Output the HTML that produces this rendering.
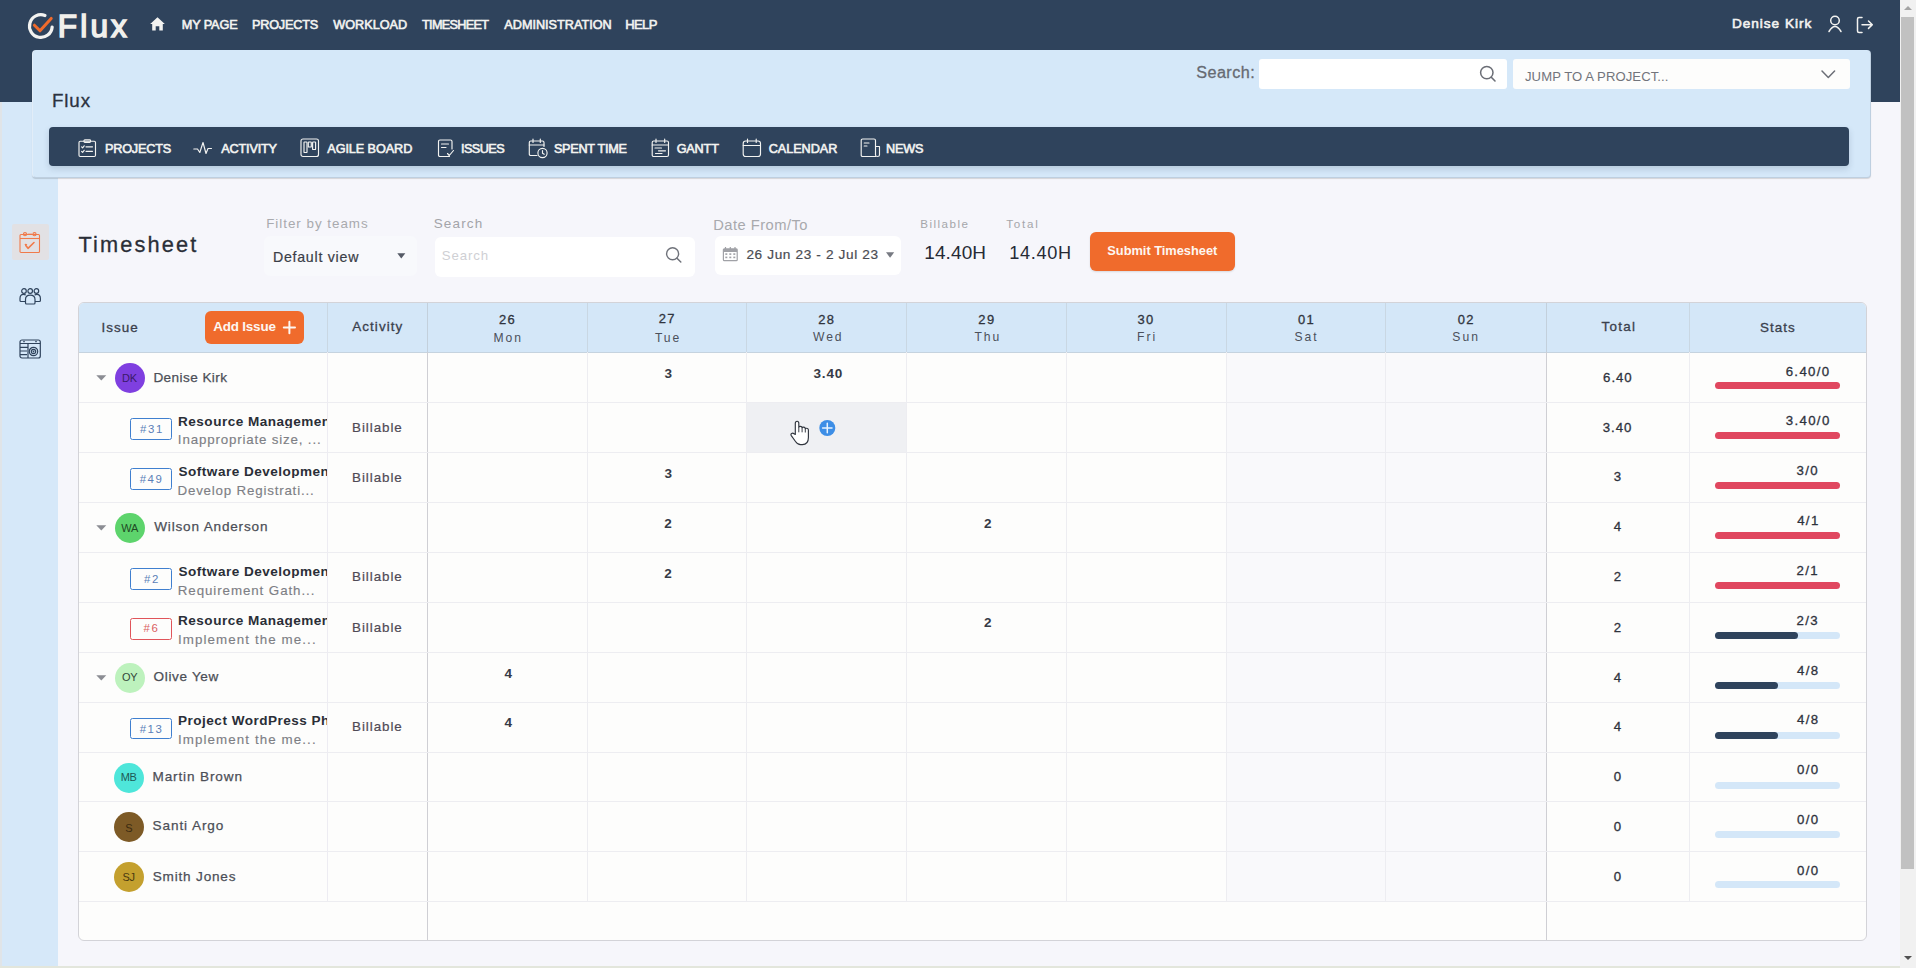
<!DOCTYPE html>
<html><head><meta charset="utf-8">
<style>
*{box-sizing:border-box;margin:0;padding:0}
html,body{width:1916px;height:968px;overflow:hidden}
body{position:relative;background:#f6f6fb;font-family:"Liberation Sans",sans-serif}
.a,.t{position:absolute}
.t{white-space:pre}
svg{position:absolute;overflow:visible}
</style></head><body>

<div class="a" style="left:0;top:0;width:1900px;height:102px;background:#2f435c"></div>
<div class="a" style="left:0;top:102px;width:58px;height:866px;background:#d6e8f9;border-left:2px solid #e0e4e8"></div>
<div class="a" style="left:32px;top:50px;width:1839px;height:127.5px;background:#d5e8f9;border-radius:4px;border:1px solid rgba(110,120,135,.22);border-top:none;border-left:1px solid #e2edf8;box-shadow:0 1px 1px rgba(0,0,0,.14)"></div>
<div class="a" style="left:49px;top:127px;width:1800px;height:39px;background:#2f435c;border-radius:4px;box-shadow:0 3px 6px rgba(40,60,90,.18)"></div>
<div class="a" style="left:1900px;top:0;width:16px;height:968px;background:#f1f1f1"></div>
<div class="a" style="left:1901px;top:17px;width:13px;height:852px;background:#c1c1c1"></div>
<svg style="left:1904px;top:5px" width="8" height="6"><path d="M0 5 L4 1 L8 5Z" fill="#a3a3a3"/></svg>
<svg style="left:1904px;top:955px" width="8" height="6"><path d="M0 1 L4 5 L8 1Z" fill="#505050"/></svg>
<div class="a" style="left:0;top:966px;width:1900px;height:2px;background:#e3e6dc"></div>
<svg style="left:26px;top:11px" width="30" height="30" viewBox="0 0 30 30">
 <path d="M26.16 16.0 A11.35 11.35 0 1 1 18.99 4.48" fill="none" stroke="#f3f3f1" stroke-width="3.2" stroke-linecap="round"/>
 <path d="M8.4 14.2 L14 19.8 L25.2 7.4" fill="none" stroke="#f06b2c" stroke-width="3" stroke-linecap="round" stroke-linejoin="round"/>
</svg>
<svg style="left:150px;top:17px" width="15" height="14" viewBox="0 0 15 14"><path d="M7.5 0.3 L14.8 7 L12.8 7 L12.8 13.5 L9.3 13.5 L9.3 9.3 L5.7 9.3 L5.7 13.5 L2.2 13.5 L2.2 7 L0.2 7 Z" fill="#f3f3f1"/></svg>
<div class="t" style="left:181.67px;top:19.28px;font-size:12.68px;line-height:12.68px;font-weight:400;color:#f3f3f1;letter-spacing:-0.086px;-webkit-text-stroke:0.6px #f3f3f1">MY PAGE</div>
<div class="t" style="left:251.95px;top:19.28px;font-size:12.68px;line-height:12.68px;font-weight:400;color:#f3f3f1;letter-spacing:-0.192px;-webkit-text-stroke:0.6px #f3f3f1">PROJECTS</div>
<div class="t" style="left:333.17px;top:19.28px;font-size:12.68px;line-height:12.68px;font-weight:400;color:#f3f3f1;letter-spacing:0.019px;-webkit-text-stroke:0.6px #f3f3f1">WORKLOAD</div>
<div class="t" style="left:422.05px;top:19.28px;font-size:12.68px;line-height:12.68px;font-weight:400;color:#f3f3f1;letter-spacing:-0.700px;-webkit-text-stroke:0.6px #f3f3f1">TIMESHEET</div>
<div class="t" style="left:504.30px;top:19.28px;font-size:12.68px;line-height:12.68px;font-weight:400;color:#f3f3f1;letter-spacing:-0.006px;-webkit-text-stroke:0.6px #f3f3f1">ADMINISTRATION</div>
<div class="t" style="left:625.26px;top:18.29px;font-size:13.04px;line-height:13.04px;font-weight:400;color:#f3f3f1;letter-spacing:-0.649px;-webkit-text-stroke:0.6px #f3f3f1">HELP</div>
<div class="t" style="left:57.86px;top:10.66px;font-size:31.62px;line-height:31.62px;font-weight:400;color:#f1f0ec;letter-spacing:3.094px;-webkit-text-stroke:1.5px #f1f0ec">Flux</div>
<div class="t" style="left:1732.03px;top:17.44px;font-size:13.58px;line-height:13.58px;font-weight:400;color:#f3f3f1;letter-spacing:0.979px;-webkit-text-stroke:0.6px #f3f3f1">Denise Kirk</div>
<svg style="left:1828px;top:15px" width="16" height="18" viewBox="0 0 16 18">
<circle cx="7" cy="5.5" r="4.3" fill="none" stroke="#f3f3f1" stroke-width="1.5"/>
<path d="M1 16.5 Q7 6.5 13 16.5" fill="none" stroke="#f3f3f1" stroke-width="1.5" stroke-linecap="round"/></svg>
<svg style="left:1856px;top:16px" width="20" height="18" viewBox="0 0 20 18">
<path d="M6 1.5 H3 Q1.5 1.5 1.5 3 V15 Q1.5 16.5 3 16.5 H6" fill="none" stroke="#f3f3f1" stroke-width="1.5" stroke-linecap="round"/>
<path d="M6 8.7 H16 M12.5 5 L16.3 8.7 L12.5 12.4" fill="none" stroke="#f3f3f1" stroke-width="1.5" stroke-linecap="round" stroke-linejoin="round"/></svg>
<div class="t" style="left:52.09px;top:91.96px;font-size:18.78px;line-height:18.78px;font-weight:400;color:#2b3240;letter-spacing:0.830px;-webkit-text-stroke:0.3px #2b3240">Flux</div>
<div class="t" style="left:1196.24px;top:63.86px;font-size:16.22px;line-height:16.22px;font-weight:400;color:#666a72;letter-spacing:0.431px;-webkit-text-stroke:0.3px #666a72">Search:</div>
<div class="a" style="left:1259px;top:59px;width:248px;height:30px;background:#fff;border-radius:3px"></div>
<svg style="left:1479px;top:65px" width="18" height="18" viewBox="0 0 18 18"><circle cx="7.8" cy="7.6" r="6.2" fill="none" stroke="#6b6e76" stroke-width="1.5"/><path d="M12.3 12.2 L16 16" stroke="#6b6e76" stroke-width="1.6" stroke-linecap="round"/></svg>
<div class="a" style="left:1513px;top:59px;width:337px;height:30px;background:#fdfdfc;border-radius:3px"></div>
<div class="t" style="left:1524.98px;top:69.70px;font-size:13.10px;line-height:13.10px;font-weight:400;color:#72747b;letter-spacing:0.083px">JUMP TO A PROJECT...</div>
<svg style="left:1821px;top:70px" width="15" height="9" viewBox="0 0 15 9"><path d="M1 1 L7.3 7.5 L13.6 1" fill="none" stroke="#6b6e76" stroke-width="1.5" stroke-linecap="round" stroke-linejoin="round"/></svg>
<div class="t" style="left:104.95px;top:142.56px;font-size:12.68px;line-height:12.68px;font-weight:400;color:#f3f3f1;letter-spacing:-0.192px;-webkit-text-stroke:0.6px #f3f3f1">PROJECTS</div>
<div class="t" style="left:221.30px;top:142.56px;font-size:12.68px;line-height:12.68px;font-weight:400;color:#f3f3f1;letter-spacing:-0.180px;-webkit-text-stroke:0.6px #f3f3f1">ACTIVITY</div>
<div class="t" style="left:327.30px;top:142.56px;font-size:12.68px;line-height:12.68px;font-weight:400;color:#f3f3f1;letter-spacing:-0.091px;-webkit-text-stroke:0.6px #f3f3f1">AGILE BOARD</div>
<div class="t" style="left:460.96px;top:142.56px;font-size:12.68px;line-height:12.68px;font-weight:400;color:#f3f3f1;letter-spacing:-0.569px;-webkit-text-stroke:0.6px #f3f3f1">ISSUES</div>
<div class="t" style="left:553.95px;top:142.56px;font-size:12.68px;line-height:12.68px;font-weight:400;color:#f3f3f1;letter-spacing:-0.290px;-webkit-text-stroke:0.6px #f3f3f1">SPENT TIME</div>
<div class="t" style="left:676.67px;top:142.56px;font-size:12.68px;line-height:12.68px;font-weight:400;color:#f3f3f1;letter-spacing:-0.171px;-webkit-text-stroke:0.6px #f3f3f1">GANTT</div>
<div class="t" style="left:768.67px;top:142.56px;font-size:12.68px;line-height:12.68px;font-weight:400;color:#f3f3f1;letter-spacing:-0.041px;-webkit-text-stroke:0.6px #f3f3f1">CALENDAR</div>
<div class="t" style="left:885.99px;top:142.56px;font-size:12.68px;line-height:12.68px;font-weight:400;color:#f3f3f1;letter-spacing:-0.160px;-webkit-text-stroke:0.6px #f3f3f1">NEWS</div>
<svg style="left:78px;top:139px" width="19" height="19" viewBox="0 0 19 19">
<rect x="1" y="2.2" width="16.5" height="15.3" rx="1.2" stroke="#f3f3f1" stroke-width="1.15" fill="none" stroke-linecap="round" stroke-linejoin="round"/><rect x="6" y="0.8" width="6.5" height="2.6" rx="0.8" stroke="#f3f3f1" stroke-width="1.15" fill="none" stroke-linecap="round" stroke-linejoin="round"/>
<path d="M3.6 7.8 L4.6 8.8 L6.2 6.8 M8 7.8 H14.5 M3.6 12.3 L4.6 13.3 L6.2 11.3 M8 12.3 H14.5" stroke="#f3f3f1" stroke-width="1.15" fill="none" stroke-linecap="round" stroke-linejoin="round"/></svg>
<svg style="left:193px;top:141px" width="20" height="15" viewBox="0 0 20 15">
<path d="M0.8 8 H4.5 L6.8 11.5 L10 1.5 L13 12.5 L15 7.5 H18.5" stroke="#f3f3f1" stroke-width="1.15" fill="none" stroke-linecap="round" stroke-linejoin="round" stroke-width="1.6"/></svg>
<svg style="left:300px;top:138px" width="20" height="20" viewBox="0 0 20 20">
<rect x="1" y="1" width="17.5" height="17.5" rx="2" stroke="#f3f3f1" stroke-width="1.15" fill="none" stroke-linecap="round" stroke-linejoin="round"/><rect x="4" y="4" width="3" height="10.5" rx="0.6" stroke="#f3f3f1" stroke-width="1.15" fill="none" stroke-linecap="round" stroke-linejoin="round"/><rect x="8.3" y="4" width="3" height="5" rx="0.6" stroke="#f3f3f1" stroke-width="1.15" fill="none" stroke-linecap="round" stroke-linejoin="round"/><rect x="12.6" y="4" width="3" height="7.5" rx="0.6" stroke="#f3f3f1" stroke-width="1.15" fill="none" stroke-linecap="round" stroke-linejoin="round"/></svg>
<svg style="left:437px;top:139px" width="19" height="19" viewBox="0 0 19 19">
<path d="M12.5 17.5 H3 Q1.5 17.5 1.5 16 V2.5 Q1.5 1 3 1 H13.5 Q15 1 15 2.5 V10" stroke="#f3f3f1" stroke-width="1.15" fill="none" stroke-linecap="round" stroke-linejoin="round"/><path d="M4.5 5 H11.5 M4.5 8.5 H9" stroke="#f3f3f1" stroke-width="1.15" fill="none" stroke-linecap="round" stroke-linejoin="round"/><path d="M10.5 14.5 L12.3 16.5 L16.5 11.5" stroke="#f3f3f1" stroke-width="1.15" fill="none" stroke-linecap="round" stroke-linejoin="round"/></svg>
<svg style="left:528px;top:138px" width="21" height="21" viewBox="0 0 21 21">
<path d="M9 17.5 H2.8 Q1.3 17.5 1.3 16 V4.5 Q1.3 3 2.8 3 H14.5 Q16 3 16 4.5 V8.5" stroke="#f3f3f1" stroke-width="1.15" fill="none" stroke-linecap="round" stroke-linejoin="round"/><path d="M1.3 7 H16 M5 1 V4.5 M12.3 1 V4.5" stroke="#f3f3f1" stroke-width="1.15" fill="none" stroke-linecap="round" stroke-linejoin="round"/><circle cx="14.5" cy="15" r="4.6" stroke="#f3f3f1" stroke-width="1.15" fill="none" stroke-linecap="round" stroke-linejoin="round"/><path d="M14.5 12.6 V15.2 L16.2 16.3" stroke="#f3f3f1" stroke-width="1.15" fill="none" stroke-linecap="round" stroke-linejoin="round"/></svg>
<svg style="left:651px;top:138px" width="19" height="20" viewBox="0 0 19 20">
<rect x="1.2" y="3" width="16.3" height="15.5" rx="1.5" stroke="#f3f3f1" stroke-width="1.15" fill="none" stroke-linecap="round" stroke-linejoin="round"/><path d="M1.2 7 H17.5 M5 1 V4.5 M13.7 1 V4.5 M4 10 H10.5 M7.5 12.8 H14.5 M4.5 15.5 H11" stroke="#f3f3f1" stroke-width="1.15" fill="none" stroke-linecap="round" stroke-linejoin="round"/></svg>
<svg style="left:742px;top:138px" width="20" height="20" viewBox="0 0 20 20">
<rect x="1.2" y="3" width="17.3" height="15.5" rx="2.5" stroke="#f3f3f1" stroke-width="1.15" fill="none" stroke-linecap="round" stroke-linejoin="round"/><path d="M1.2 7.5 H18.5 M5.5 1 V4.5 M14.2 1 V4.5" stroke="#f3f3f1" stroke-width="1.15" fill="none" stroke-linecap="round" stroke-linejoin="round"/></svg>
<svg style="left:860px;top:138px" width="22" height="20" viewBox="0 0 22 20">
<path d="M15.5 18.5 H2.7 Q1.2 18.5 1.2 17 V2.5 Q1.2 1 2.7 1 H14 Q15.5 1 15.5 2.5 V17 Q15.5 18.5 17.5 18.5 Q19.5 18.5 19.5 17 V8.5 H15.5" stroke="#f3f3f1" stroke-width="1.15" fill="none" stroke-linecap="round" stroke-linejoin="round"/><path d="M4.2 5 H9 M4.2 8 H7" stroke="#f3f3f1" stroke-width="1.15" fill="none" stroke-linecap="round" stroke-linejoin="round"/></svg>
<div class="a" style="left:11.5px;top:224px;width:37px;height:36px;background:#e2e1e4;border-radius:2px"></div>
<svg style="left:19px;top:231px" width="22" height="23" viewBox="0 0 22 23">
<rect x="1" y="3.5" width="19.5" height="18" rx="1" fill="none" stroke="#f07a4a" stroke-width="1.1"/>
<path d="M1 7.5 H20.5" stroke="#f07a4a" stroke-width="1.1"/>
<circle cx="6" cy="3.2" r="1.6" fill="none" stroke="#f07a4a" stroke-width="1.1"/><circle cx="15.5" cy="3.2" r="1.6" fill="none" stroke="#f07a4a" stroke-width="1.1"/>
<path d="M8.5 3.2 H13" stroke="#f07a4a" stroke-width="1.1"/>
<path d="M6.8 14.5 L9 17.3 L15 11.5" fill="none" stroke="#f07a4a" stroke-width="1.6" stroke-linecap="round" stroke-linejoin="round"/>
<path d="M6 14 Q6.5 12.8 8 13.8" fill="none" stroke="#f07a4a" stroke-width="1.1"/></svg>
<svg style="left:19px;top:287px" width="23" height="18" viewBox="0 0 23 18">
<circle cx="5" cy="4" r="2.3" fill="none" stroke="#2f435c" stroke-width="1.2"/><circle cx="11.2" cy="4" r="2.3" fill="none" stroke="#2f435c" stroke-width="1.2"/><circle cx="17.4" cy="4" r="2.3" fill="none" stroke="#2f435c" stroke-width="1.2"/>
<path d="M6.8 8 Q5.5 7.3 4.5 7.3 Q1 7.3 1 11.5 V13.5 Q1 14.5 2 14.5 H6.5" fill="none" stroke="#2f435c" stroke-width="1.2"/>
<path d="M15.6 8 Q16.9 7.3 17.9 7.3 Q21.4 7.3 21.4 11.5 V13.5 Q21.4 14.5 20.4 14.5 H16" fill="none" stroke="#2f435c" stroke-width="1.2"/>
<path d="M6.5 16 V12.5 Q6.5 8.2 11.2 8.2 Q16 8.2 16 12.5 V16 Q16 17 15 17 H7.5 Q6.5 17 6.5 16 Z" fill="none" stroke="#2f435c" stroke-width="1.2"/></svg>
<svg style="left:19px;top:339px" width="23" height="20" viewBox="0 0 23 20">
<rect x="1" y="1" width="20.3" height="18" rx="2" fill="none" stroke="#2f435c" stroke-width="1.2"/><path d="M1 4.5 H21.3 M1 8.3 H9 M1 12 H8 M1 15.7 H8 M9 4.5 V19" fill="none" stroke="#2f435c" stroke-width="1.2"/>
<circle cx="5" cy="2.6" r="0.8" fill="#2f435c"/><circle cx="17" cy="2.6" r="0.8" fill="#2f435c"/>
<circle cx="14.5" cy="12.5" r="4.2" fill="none" stroke="#2f435c" stroke-width="1.2"/><circle cx="14.5" cy="12.5" r="2.2" fill="none" stroke="#2f435c" stroke-width="1.2"/><circle cx="14.5" cy="12.5" r="0.9" fill="#2f435c"/></svg>
<div class="t" style="left:78.39px;top:233.62px;font-size:21.76px;line-height:21.76px;font-weight:400;color:#2a2e37;letter-spacing:2.152px;-webkit-text-stroke:0.3px #2a2e37">Timesheet</div>
<div class="t" style="left:266.17px;top:217.33px;font-size:13.40px;line-height:13.40px;font-weight:400;color:#a9aaae;letter-spacing:0.977px">Filter by teams</div>
<div class="a" style="left:264px;top:236px;width:153px;height:40px;background:#f8f9fc;border-radius:6px"></div>
<div class="t" style="left:272.90px;top:249.78px;font-size:14.19px;line-height:14.19px;font-weight:400;color:#3b3e48;letter-spacing:0.746px;-webkit-text-stroke:0.2px #3b3e48">Default view</div>
<svg style="left:397px;top:253px" width="9" height="6"><path d="M0.3 0.3 H8.3 L4.3 5.5Z" fill="#555a66"/></svg>
<div class="t" style="left:433.68px;top:217.40px;font-size:13.51px;line-height:13.51px;font-weight:400;color:#a3a4a9;letter-spacing:1.157px">Search</div>
<div class="a" style="left:435px;top:237px;width:260px;height:40px;background:#fff;border-radius:6px"></div>
<div class="t" style="left:441.78px;top:248.87px;font-size:13.24px;line-height:13.24px;font-weight:400;color:#cfd0d4;letter-spacing:0.862px">Search</div>
<svg style="left:665px;top:246px" width="18" height="18" viewBox="0 0 18 18"><circle cx="7.6" cy="7.8" r="6" fill="none" stroke="#6f727a" stroke-width="1.4"/><path d="M12 12.3 L15.8 16" stroke="#6f727a" stroke-width="1.5" stroke-linecap="round"/></svg>
<div class="t" style="left:713.26px;top:218.41px;font-size:14.73px;line-height:14.73px;font-weight:400;color:#a8a9ad;letter-spacing:0.468px">Date From/To</div>
<div class="a" style="left:715px;top:236px;width:186px;height:39px;background:#fff;border-radius:6px"></div>
<svg style="left:722px;top:246px" width="17" height="16" viewBox="0 0 17 16">
<rect x="0.8" y="2.2" width="15" height="13" rx="1.5" fill="#a0a1a6"/><rect x="2" y="6" width="12.6" height="8" fill="#fff"/>
<path d="M3.5 1 V3.5 M8.3 1 V3.5 M13 1 V3.5" stroke="#a0a1a6" stroke-width="1.2"/>
<g fill="#a0a1a6"><rect x="3.3" y="7.3" width="2" height="1.6"/><rect x="7.3" y="7.3" width="2" height="1.6"/><rect x="11.3" y="7.3" width="2" height="1.6"/><rect x="3.3" y="10.6" width="2" height="1.6"/><rect x="7.3" y="10.6" width="2" height="1.6"/><rect x="11.3" y="10.6" width="2" height="1.6"/></g></svg>
<div class="t" style="left:746.38px;top:247.62px;font-size:13.65px;line-height:13.65px;font-weight:400;color:#4a4c53;letter-spacing:0.626px;-webkit-text-stroke:0.2px #4a4c53">26 Jun 23 - 2 Jul 23</div>
<svg style="left:886px;top:252px" width="9" height="6"><path d="M0 0.3 H8.2 L4.1 5.8Z" fill="#777a82"/></svg>
<div class="t" style="left:920.33px;top:218.03px;font-size:11.62px;line-height:11.62px;font-weight:400;color:#a5a6aa;letter-spacing:1.453px">Billable</div>
<div class="t" style="left:1006.21px;top:218.31px;font-size:11.62px;line-height:11.62px;font-weight:400;color:#a5a6aa;letter-spacing:1.752px">Total</div>
<div class="t" style="left:924.20px;top:242.95px;font-size:19.01px;line-height:19.01px;font-weight:400;color:#262a35;letter-spacing:0.123px">14.40H</div>
<div class="t" style="left:1009.19px;top:244.03px;font-size:18.17px;line-height:18.17px;font-weight:400;color:#262a35;letter-spacing:0.681px">14.40H</div>
<div class="a" style="left:1090px;top:231.5px;width:144.5px;height:39.5px;background:#f06b2c;border-radius:6px;box-shadow:0 1px 2px rgba(0,0,0,.12)"></div>
<div class="t" style="left:1107.29px;top:245.30px;font-size:12.84px;line-height:12.84px;font-weight:700;color:#fdf6f1;letter-spacing:-0.018px">Submit Timesheet</div>
<div class="a" style="left:78px;top:302px;width:1789px;height:639px;background:#fdfdfc;border:1px solid #d3d3d8;border-radius:6px;overflow:hidden">
<div class="a" style="left:0;top:0;width:100%;height:50px;background:#d4e7f8;border-bottom:1px solid #c5d3df"></div>
<div class="a" style="left:1148.0px;top:50px;width:319.39999999999986px;height:549px;background:#f9f9fb"></div>
</div>
<div class="a" style="left:327.0px;top:303px;width:1px;height:49px;background:#c9d7e3"></div>
<div class="a" style="left:327.0px;top:352px;width:1px;height:550px;background:#edecf2"></div>
<div class="a" style="left:427.0px;top:303px;width:1px;height:49px;background:#c3d0dc"></div>
<div class="a" style="left:427.0px;top:352px;width:1px;height:588px;background:#cfcfd4"></div>
<div class="a" style="left:586.7px;top:303px;width:1px;height:49px;background:#c9d7e3"></div>
<div class="a" style="left:586.7px;top:352px;width:1px;height:550px;background:#ededf1"></div>
<div class="a" style="left:746.4px;top:303px;width:1px;height:49px;background:#c9d7e3"></div>
<div class="a" style="left:746.4px;top:352px;width:1px;height:550px;background:#ededf1"></div>
<div class="a" style="left:906.1px;top:303px;width:1px;height:49px;background:#c9d7e3"></div>
<div class="a" style="left:906.1px;top:352px;width:1px;height:550px;background:#ededf1"></div>
<div class="a" style="left:1065.8px;top:303px;width:1px;height:49px;background:#c9d7e3"></div>
<div class="a" style="left:1065.8px;top:352px;width:1px;height:550px;background:#ededf1"></div>
<div class="a" style="left:1225.5px;top:303px;width:1px;height:49px;background:#c9d7e3"></div>
<div class="a" style="left:1225.5px;top:352px;width:1px;height:550px;background:#ededf1"></div>
<div class="a" style="left:1385.2px;top:303px;width:1px;height:49px;background:#c9d7e3"></div>
<div class="a" style="left:1385.2px;top:352px;width:1px;height:550px;background:#ededf1"></div>
<div class="a" style="left:1546.0px;top:303px;width:1px;height:49px;background:#c3d0dc"></div>
<div class="a" style="left:1546.0px;top:352px;width:1px;height:588px;background:#cfcfd4"></div>
<div class="a" style="left:1688.5px;top:303px;width:1px;height:49px;background:#c9d7e3"></div>
<div class="a" style="left:1688.5px;top:352px;width:1px;height:550px;background:#ededf1"></div>
<div class="a" style="left:79px;top:402px;width:1787px;height:1px;background:#ededf1"></div>
<div class="a" style="left:79px;top:452px;width:1787px;height:1px;background:#ededf1"></div>
<div class="a" style="left:79px;top:502px;width:1787px;height:1px;background:#ededf1"></div>
<div class="a" style="left:79px;top:552px;width:1787px;height:1px;background:#ededf1"></div>
<div class="a" style="left:79px;top:602px;width:1787px;height:1px;background:#ededf1"></div>
<div class="a" style="left:79px;top:652px;width:1787px;height:1px;background:#ededf1"></div>
<div class="a" style="left:79px;top:702px;width:1787px;height:1px;background:#ededf1"></div>
<div class="a" style="left:79px;top:752px;width:1787px;height:1px;background:#ededf1"></div>
<div class="a" style="left:79px;top:801px;width:1787px;height:1px;background:#ededf1"></div>
<div class="a" style="left:79px;top:851px;width:1787px;height:1px;background:#ededf1"></div>
<div class="a" style="left:79px;top:901px;width:1787px;height:1px;background:#ededf1"></div>
<div class="t" style="left:101.42px;top:321.04px;font-size:13.43px;line-height:13.43px;font-weight:400;color:#3a404c;letter-spacing:1.038px;-webkit-text-stroke:0.3px #3a404c">Issue</div>
<div class="a" style="left:204.8px;top:311.3px;width:99.5px;height:32.5px;background:#f06b2c;border-radius:6px"></div>
<div class="t" style="left:213.18px;top:320.30px;font-size:13.43px;line-height:13.43px;font-weight:700;color:#fdf6f1;letter-spacing:-0.181px">Add Issue</div>
<svg style="left:283px;top:321px" width="13" height="13" viewBox="0 0 13 13"><path d="M6.4 0.8 V12.2 M0.8 6.4 H12" stroke="#fdf6f1" stroke-width="2" stroke-linecap="round"/></svg>
<div class="t" style="left:352.29px;top:320.26px;font-size:13.43px;line-height:13.43px;font-weight:400;color:#3a404c;letter-spacing:1.067px;-webkit-text-stroke:0.3px #3a404c">Activity</div>
<div class="t" style="left:1601.38px;top:320.30px;font-size:13.43px;line-height:13.43px;font-weight:400;color:#3a404c;letter-spacing:1.335px;-webkit-text-stroke:0.3px #3a404c">Total</div>
<div class="t" style="left:1760.06px;top:320.62px;font-size:13.43px;line-height:13.43px;font-weight:400;color:#3a404c;letter-spacing:0.998px;-webkit-text-stroke:0.3px #3a404c">Stats</div>
<div class="t" style="left:498.98px;top:313.52px;font-size:12.96px;line-height:12.96px;font-weight:400;color:#30343e;letter-spacing:1.383px;-webkit-text-stroke:0.3px #30343e">26</div>
<div class="t" style="left:493.44px;top:331.54px;font-size:12.14px;line-height:12.14px;font-weight:400;color:#4b505b;letter-spacing:1.971px">Mon</div>
<div class="t" style="left:658.67px;top:313.17px;font-size:12.96px;line-height:12.96px;font-weight:400;color:#30343e;letter-spacing:1.383px;-webkit-text-stroke:0.3px #30343e">27</div>
<div class="t" style="left:654.88px;top:331.54px;font-size:12.14px;line-height:12.14px;font-weight:400;color:#4b505b;letter-spacing:1.971px">Tue</div>
<div class="t" style="left:818.22px;top:313.52px;font-size:12.96px;line-height:12.96px;font-weight:400;color:#30343e;letter-spacing:1.383px;-webkit-text-stroke:0.3px #30343e">28</div>
<div class="t" style="left:812.96px;top:331.01px;font-size:12.14px;line-height:12.14px;font-weight:400;color:#4b505b;letter-spacing:1.971px">Wed</div>
<div class="t" style="left:978.31px;top:313.52px;font-size:12.96px;line-height:12.96px;font-weight:400;color:#30343e;letter-spacing:1.383px;-webkit-text-stroke:0.3px #30343e">29</div>
<div class="t" style="left:974.40px;top:331.01px;font-size:12.14px;line-height:12.14px;font-weight:400;color:#4b505b;letter-spacing:1.971px">Thu</div>
<div class="t" style="left:1137.53px;top:313.52px;font-size:12.96px;line-height:12.96px;font-weight:400;color:#30343e;letter-spacing:1.383px;-webkit-text-stroke:0.3px #30343e">30</div>
<div class="t" style="left:1137.05px;top:331.46px;font-size:12.14px;line-height:12.14px;font-weight:400;color:#4b505b;letter-spacing:1.971px">Fri</div>
<div class="t" style="left:1298.01px;top:313.52px;font-size:12.96px;line-height:12.96px;font-weight:400;color:#30343e;letter-spacing:1.383px;-webkit-text-stroke:0.3px #30343e">01</div>
<div class="t" style="left:1294.49px;top:331.19px;font-size:12.14px;line-height:12.14px;font-weight:400;color:#4b505b;letter-spacing:1.971px">Sat</div>
<div class="t" style="left:1457.63px;top:313.52px;font-size:12.96px;line-height:12.96px;font-weight:400;color:#30343e;letter-spacing:1.383px;-webkit-text-stroke:0.3px #30343e">02</div>
<div class="t" style="left:1452.37px;top:331.19px;font-size:12.14px;line-height:12.14px;font-weight:400;color:#4b505b;letter-spacing:1.971px">Sun</div>
<svg style="left:95.5px;top:375.1px" width="11" height="6"><path d="M0.3 0.3 H10.3 L5.3 5.6Z" fill="#8b8d93"/></svg>
<div class="a" style="left:115px;top:363.3px;width:30px;height:30px;border-radius:50%;background:#7f3fe0"></div>
<div class="t" style="left:122.06px;top:372.97px;font-size:11.00px;line-height:11.00px;font-weight:400;color:#3a1a6a;letter-spacing:-0.300px">DK</div>
<div class="t" style="left:153.40px;top:370.55px;font-size:13.57px;line-height:13.57px;font-weight:400;color:#4c4f57;letter-spacing:0.429px;-webkit-text-stroke:0.25px #4c4f57">Denise Kirk</div>
<div class="t" style="left:664.40px;top:366.67px;font-size:13.52px;line-height:13.52px;font-weight:700;color:#363a45;letter-spacing:0.860px">3</div>
<div class="t" style="left:813.40px;top:366.67px;font-size:13.52px;line-height:13.52px;font-weight:700;color:#363a45;letter-spacing:0.860px">3.40</div>
<div class="t" style="left:1603.09px;top:370.95px;font-size:13.24px;line-height:13.24px;font-weight:400;color:#2e323c;letter-spacing:0.958px;-webkit-text-stroke:0.3px #2e323c">6.40</div>
<div class="t" style="left:1785.64px;top:364.53px;font-size:13.24px;line-height:13.24px;font-weight:400;color:#2e323c;letter-spacing:1.357px;-webkit-text-stroke:0.3px #2e323c">6.40/0</div>
<div class="a" style="left:1715px;top:382.3px;width:125px;height:7px;border-radius:4px;background:#e0475f"></div>
<div class="a" style="left:129.8px;top:418.4px;width:42px;height:21.5px;border:1px solid #3f7fcf;border-radius:2.5px"></div>
<div class="t" style="left:140.03px;top:424.37px;font-size:11.41px;line-height:11.41px;font-weight:400;color:#5a7fb8;letter-spacing:1.609px">#31</div>
<div class="t" style="left:178.05px;top:414.51px;font-size:13.56px;line-height:13.56px;font-weight:700;color:#2a2e37;letter-spacing:0.488px;width:148.95px;overflow:hidden">Resource Management</div>
<div class="t" style="left:177.86px;top:433.44px;font-size:13.35px;line-height:13.35px;font-weight:400;color:#7d7f85;letter-spacing:0.825px;-webkit-text-stroke:0.15px #7d7f85">Inappropriate size, ...</div>
<div class="t" style="left:352.05px;top:420.75px;font-size:13.38px;line-height:13.38px;font-weight:400;color:#4f4a55;letter-spacing:0.947px;-webkit-text-stroke:0.2px #4f4a55">Billable</div>
<div class="t" style="left:1602.75px;top:421.09px;font-size:13.24px;line-height:13.24px;font-weight:400;color:#2e323c;letter-spacing:0.958px;-webkit-text-stroke:0.3px #2e323c">3.40</div>
<div class="t" style="left:1785.70px;top:413.87px;font-size:13.24px;line-height:13.24px;font-weight:400;color:#2e323c;letter-spacing:1.357px;-webkit-text-stroke:0.3px #2e323c">3.40/0</div>
<div class="a" style="left:1715px;top:432.2px;width:125px;height:7px;border-radius:4px;background:#e0475f"></div>
<div class="a" style="left:129.8px;top:468.3px;width:42px;height:21.5px;border:1px solid #3f7fcf;border-radius:2.5px"></div>
<div class="t" style="left:139.63px;top:473.71px;font-size:11.41px;line-height:11.41px;font-weight:400;color:#5a7fb8;letter-spacing:1.609px">#49</div>
<div class="t" style="left:178.59px;top:464.73px;font-size:13.56px;line-height:13.56px;font-weight:700;color:#2a2e37;letter-spacing:0.488px;width:148.41px;overflow:hidden">Software Development</div>
<div class="t" style="left:177.51px;top:483.58px;font-size:13.35px;line-height:13.35px;font-weight:400;color:#7d7f85;letter-spacing:0.798px;-webkit-text-stroke:0.15px #7d7f85">Develop Registrati...</div>
<div class="t" style="left:352.05px;top:470.89px;font-size:13.38px;line-height:13.38px;font-weight:400;color:#4f4a55;letter-spacing:0.947px;-webkit-text-stroke:0.2px #4f4a55">Billable</div>
<div class="t" style="left:664.40px;top:466.95px;font-size:13.52px;line-height:13.52px;font-weight:700;color:#363a45;letter-spacing:0.860px">3</div>
<div class="t" style="left:1613.86px;top:470.43px;font-size:13.24px;line-height:13.24px;font-weight:400;color:#2e323c;letter-spacing:0.958px;-webkit-text-stroke:0.3px #2e323c">3</div>
<div class="t" style="left:1796.54px;top:464.01px;font-size:13.24px;line-height:13.24px;font-weight:400;color:#2e323c;letter-spacing:1.357px;-webkit-text-stroke:0.3px #2e323c">3/0</div>
<div class="a" style="left:1715px;top:482.1px;width:125px;height:7px;border-radius:4px;background:#e0475f"></div>
<svg style="left:95.5px;top:524.8px" width="11" height="6"><path d="M0.3 0.3 H10.3 L5.3 5.6Z" fill="#8b8d93"/></svg>
<div class="a" style="left:115px;top:513.0px;width:30px;height:30px;border-radius:50%;background:#5dd46c"></div>
<div class="t" style="left:121.34px;top:522.59px;font-size:11.00px;line-height:11.00px;font-weight:400;color:#1f4a25;letter-spacing:-0.300px">WA</div>
<div class="t" style="left:154.19px;top:520.17px;font-size:13.57px;line-height:13.57px;font-weight:400;color:#4c4f57;letter-spacing:0.822px;-webkit-text-stroke:0.25px #4c4f57">Wilson Anderson</div>
<div class="t" style="left:664.33px;top:516.74px;font-size:13.52px;line-height:13.52px;font-weight:700;color:#363a45;letter-spacing:0.860px">2</div>
<div class="t" style="left:983.97px;top:516.74px;font-size:13.52px;line-height:13.52px;font-weight:700;color:#363a45;letter-spacing:0.860px">2</div>
<div class="t" style="left:1613.86px;top:520.12px;font-size:13.24px;line-height:13.24px;font-weight:400;color:#2e323c;letter-spacing:0.958px;-webkit-text-stroke:0.3px #2e323c">4</div>
<div class="t" style="left:1797.14px;top:513.80px;font-size:13.24px;line-height:13.24px;font-weight:400;color:#2e323c;letter-spacing:1.357px;-webkit-text-stroke:0.3px #2e323c">4/1</div>
<div class="a" style="left:1715px;top:532.0px;width:125px;height:7px;border-radius:4px;background:#e0475f"></div>
<div class="a" style="left:129.8px;top:568.1px;width:42px;height:21.5px;border:1px solid #3f7fcf;border-radius:2.5px"></div>
<div class="t" style="left:144.03px;top:573.64px;font-size:11.41px;line-height:11.41px;font-weight:400;color:#5a7fb8;letter-spacing:1.609px">#2</div>
<div class="t" style="left:178.59px;top:564.61px;font-size:13.56px;line-height:13.56px;font-weight:700;color:#2a2e37;letter-spacing:0.488px;width:148.41px;overflow:hidden">Software Development</div>
<div class="t" style="left:177.83px;top:583.86px;font-size:13.35px;line-height:13.35px;font-weight:400;color:#7d7f85;letter-spacing:0.909px;-webkit-text-stroke:0.15px #7d7f85">Requirement Gath...</div>
<div class="t" style="left:352.05px;top:570.37px;font-size:13.38px;line-height:13.38px;font-weight:400;color:#4f4a55;letter-spacing:0.947px;-webkit-text-stroke:0.2px #4f4a55">Billable</div>
<div class="t" style="left:664.33px;top:566.88px;font-size:13.52px;line-height:13.52px;font-weight:700;color:#363a45;letter-spacing:0.860px">2</div>
<div class="t" style="left:1613.79px;top:570.36px;font-size:13.24px;line-height:13.24px;font-weight:400;color:#2e323c;letter-spacing:0.958px;-webkit-text-stroke:0.3px #2e323c">2</div>
<div class="t" style="left:1796.54px;top:563.94px;font-size:13.24px;line-height:13.24px;font-weight:400;color:#2e323c;letter-spacing:1.357px;-webkit-text-stroke:0.3px #2e323c">2/1</div>
<div class="a" style="left:1715px;top:581.9px;width:125px;height:7px;border-radius:4px;background:#e0475f"></div>
<div class="a" style="left:129.8px;top:618.0px;width:42px;height:21.5px;border:1px solid #e0545a;border-radius:2.5px"></div>
<div class="t" style="left:143.57px;top:623.33px;font-size:11.41px;line-height:11.41px;font-weight:400;color:#d9605f;letter-spacing:1.609px">#6</div>
<div class="t" style="left:178.05px;top:613.87px;font-size:13.56px;line-height:13.56px;font-weight:700;color:#2a2e37;letter-spacing:0.488px;width:148.95px;overflow:hidden">Resource Management</div>
<div class="t" style="left:177.98px;top:633.20px;font-size:13.35px;line-height:13.35px;font-weight:400;color:#7d7f85;letter-spacing:1.096px;-webkit-text-stroke:0.15px #7d7f85">Implement the me...</div>
<div class="t" style="left:352.05px;top:620.51px;font-size:13.38px;line-height:13.38px;font-weight:400;color:#4f4a55;letter-spacing:0.947px;-webkit-text-stroke:0.2px #4f4a55">Billable</div>
<div class="t" style="left:983.97px;top:616.22px;font-size:13.52px;line-height:13.52px;font-weight:700;color:#363a45;letter-spacing:0.860px">2</div>
<div class="t" style="left:1613.79px;top:620.50px;font-size:13.24px;line-height:13.24px;font-weight:400;color:#2e323c;letter-spacing:0.958px;-webkit-text-stroke:0.3px #2e323c">2</div>
<div class="t" style="left:1796.48px;top:613.63px;font-size:13.24px;line-height:13.24px;font-weight:400;color:#2e323c;letter-spacing:1.357px;-webkit-text-stroke:0.3px #2e323c">2/3</div>
<div class="a" style="left:1715px;top:631.8px;width:125px;height:7px;border-radius:4px;background:#d4e7f8"></div>
<div class="a" style="left:1715px;top:631.8px;width:83.3px;height:7px;border-radius:4px;background:#2f435c"></div>
<svg style="left:95.5px;top:674.5px" width="11" height="6"><path d="M0.3 0.3 H10.3 L5.3 5.6Z" fill="#8b8d93"/></svg>
<div class="a" style="left:115px;top:662.7px;width:30px;height:30px;border-radius:50%;background:#bdf2bd"></div>
<div class="t" style="left:121.95px;top:672.21px;font-size:11.00px;line-height:11.00px;font-weight:400;color:#34483a;letter-spacing:-0.300px">OY</div>
<div class="t" style="left:153.61px;top:669.79px;font-size:13.57px;line-height:13.57px;font-weight:400;color:#4c4f57;letter-spacing:0.644px;-webkit-text-stroke:0.25px #4c4f57">Olive Yew</div>
<div class="t" style="left:504.58px;top:666.61px;font-size:13.52px;line-height:13.52px;font-weight:700;color:#363a45;letter-spacing:0.860px">4</div>
<div class="t" style="left:1613.86px;top:670.54px;font-size:13.24px;line-height:13.24px;font-weight:400;color:#2e323c;letter-spacing:0.958px;-webkit-text-stroke:0.3px #2e323c">4</div>
<div class="t" style="left:1797.07px;top:663.77px;font-size:13.24px;line-height:13.24px;font-weight:400;color:#2e323c;letter-spacing:1.357px;-webkit-text-stroke:0.3px #2e323c">4/8</div>
<div class="a" style="left:1715px;top:681.7px;width:125px;height:7px;border-radius:4px;background:#d4e7f8"></div>
<div class="a" style="left:1715px;top:681.7px;width:62.5px;height:7px;border-radius:4px;background:#2f435c"></div>
<div class="a" style="left:129.8px;top:717.8000000000001px;width:42px;height:21.5px;border:1px solid #3f7fcf;border-radius:2.5px"></div>
<div class="t" style="left:139.63px;top:723.61px;font-size:11.41px;line-height:11.41px;font-weight:400;color:#5a7fb8;letter-spacing:1.609px">#13</div>
<div class="t" style="left:178.05px;top:714.23px;font-size:13.56px;line-height:13.56px;font-weight:700;color:#2a2e37;letter-spacing:0.488px;width:148.95px;overflow:hidden">Project WordPress Phase</div>
<div class="t" style="left:177.98px;top:733.48px;font-size:13.35px;line-height:13.35px;font-weight:400;color:#7d7f85;letter-spacing:1.096px;-webkit-text-stroke:0.15px #7d7f85">Implement the me...</div>
<div class="t" style="left:352.05px;top:719.99px;font-size:13.38px;line-height:13.38px;font-weight:400;color:#4f4a55;letter-spacing:0.947px;-webkit-text-stroke:0.2px #4f4a55">Billable</div>
<div class="t" style="left:504.58px;top:715.95px;font-size:13.52px;line-height:13.52px;font-weight:700;color:#363a45;letter-spacing:0.860px">4</div>
<div class="t" style="left:1613.86px;top:719.88px;font-size:13.24px;line-height:13.24px;font-weight:400;color:#2e323c;letter-spacing:0.958px;-webkit-text-stroke:0.3px #2e323c">4</div>
<div class="t" style="left:1797.07px;top:713.11px;font-size:13.24px;line-height:13.24px;font-weight:400;color:#2e323c;letter-spacing:1.357px;-webkit-text-stroke:0.3px #2e323c">4/8</div>
<div class="a" style="left:1715px;top:731.6px;width:125px;height:7px;border-radius:4px;background:#d4e7f8"></div>
<div class="a" style="left:1715px;top:731.6px;width:62.5px;height:7px;border-radius:4px;background:#2f435c"></div>
<div class="a" style="left:114.2px;top:762.5px;width:30px;height:30px;border-radius:50%;background:#4ee6da"></div>
<div class="t" style="left:120.73px;top:772.49px;font-size:11.00px;line-height:11.00px;font-weight:400;color:#1e5a56;letter-spacing:-0.300px">MB</div>
<div class="t" style="left:152.52px;top:770.07px;font-size:13.57px;line-height:13.57px;font-weight:400;color:#4c4f57;letter-spacing:0.865px;-webkit-text-stroke:0.25px #4c4f57">Martin Brown</div>
<div class="t" style="left:1613.79px;top:770.47px;font-size:13.24px;line-height:13.24px;font-weight:400;color:#2e323c;letter-spacing:0.958px;-webkit-text-stroke:0.3px #2e323c">0</div>
<div class="t" style="left:1796.94px;top:763.25px;font-size:13.24px;line-height:13.24px;font-weight:400;color:#2e323c;letter-spacing:1.357px;-webkit-text-stroke:0.3px #2e323c">0/0</div>
<div class="a" style="left:1715px;top:781.5px;width:125px;height:7px;border-radius:4px;background:#d4e7f8"></div>
<div class="a" style="left:114.2px;top:812.4px;width:30px;height:30px;border-radius:50%;background:#7d5a26"></div>
<div class="t" style="left:125.31px;top:822.63px;font-size:11.00px;line-height:11.00px;font-weight:400;color:#3b2a10;letter-spacing:-0.300px">S</div>
<div class="t" style="left:152.53px;top:819.44px;font-size:13.57px;line-height:13.57px;font-weight:400;color:#4c4f57;letter-spacing:0.912px;-webkit-text-stroke:0.25px #4c4f57">Santi Argo</div>
<div class="t" style="left:1613.79px;top:819.81px;font-size:13.24px;line-height:13.24px;font-weight:400;color:#2e323c;letter-spacing:0.958px;-webkit-text-stroke:0.3px #2e323c">0</div>
<div class="t" style="left:1796.94px;top:813.39px;font-size:13.24px;line-height:13.24px;font-weight:400;color:#2e323c;letter-spacing:1.357px;-webkit-text-stroke:0.3px #2e323c">0/0</div>
<div class="a" style="left:1715px;top:831.4px;width:125px;height:7px;border-radius:4px;background:#d4e7f8"></div>
<div class="a" style="left:114.2px;top:862.3px;width:30px;height:30px;border-radius:50%;background:#c4a02e"></div>
<div class="t" style="left:122.48px;top:871.97px;font-size:11.00px;line-height:11.00px;font-weight:400;color:#4a3a10;letter-spacing:-0.300px">SJ</div>
<div class="t" style="left:152.69px;top:869.55px;font-size:13.57px;line-height:13.57px;font-weight:400;color:#4c4f57;letter-spacing:0.819px;-webkit-text-stroke:0.25px #4c4f57">Smith Jones</div>
<div class="t" style="left:1613.79px;top:869.95px;font-size:13.24px;line-height:13.24px;font-weight:400;color:#2e323c;letter-spacing:0.958px;-webkit-text-stroke:0.3px #2e323c">0</div>
<div class="t" style="left:1796.94px;top:863.53px;font-size:13.24px;line-height:13.24px;font-weight:400;color:#2e323c;letter-spacing:1.357px;-webkit-text-stroke:0.3px #2e323c">0/0</div>
<div class="a" style="left:1715px;top:881.3px;width:125px;height:7px;border-radius:4px;background:#d4e7f8"></div>
<div class="a" style="left:746.9px;top:403px;width:159.2px;height:49px;background:#eff0f3"></div>
<svg style="left:819px;top:420px" width="17" height="17" viewBox="0 0 17 17"><circle cx="8.3" cy="8" r="8" fill="#3d8ee6"/><path d="M8.3 3.3 V12.7 M3.6 8 H13" stroke="#e8f4ff" stroke-width="1.5" stroke-linecap="round"/></svg>
<svg style="left:789px;top:420px" width="22" height="27" viewBox="0 0 22 27">
<path d="M6.3 14.5 V3.3 Q6.3 1.2 8.1 1.2 Q9.8 1.2 9.8 3.3 V7.2 Q10 6.3 11.5 6.3 Q13 6.3 13.1 7.6 Q13.4 7.1 14.7 7.1 Q16.2 7.1 16.3 8.6 Q16.6 8.2 17.6 8.2 Q19.4 8.2 19.4 10.2 V17.5 Q19.4 24.6 13.3 24.6 H11.5 Q8.6 24.6 6.5 21.5 L2.3 15.6 Q1.4 14.2 2.7 13.4 Q4 12.7 5 13.8 Z" fill="#fff" stroke="#30353e" stroke-width="1.15" stroke-linejoin="round"/>
<path d="M9.8 7.2 V12.3 M13.1 7.6 V12.3 M16.3 8.6 V12.5" stroke="#30353e" stroke-width="0.95"/></svg>
</body></html>
